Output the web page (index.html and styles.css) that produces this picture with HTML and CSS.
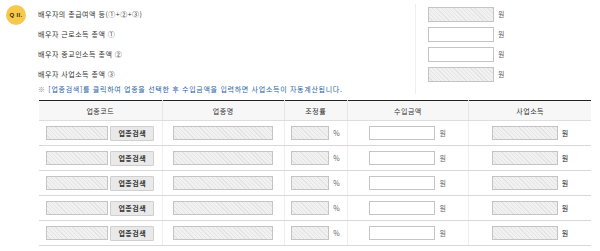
FILE: index.html
```html
<!DOCTYPE html>
<html lang="ko">
<head>
  <meta charset="UTF-8" />
  <title>배우자 소득</title>
  <link rel="stylesheet" href="styles.css">
</head>
<body>

  <div class="wrap">
    <div class="badge">Q II.</div>

    <div class="content">
      <div class="summary">
        <div class="labels">
          <div class="row">배우자의 총급여액 등(①+②+③)</div>
          <div class="row">배우자 근로소득 총액 ①</div>
          <div class="row">배우자 종교인소득 총액 ②</div>
          <div class="row">배우자 사업소득 총액 ③</div>
          <div class="note"><span class="mark">※</span> [업종검색]를 클릭하여 업종을 선택한 후 수입금액을 입력하면 사업소득이 자동계산됩니다.</div>
        </div>
        <div class="amounts">
          <div class="row"><input class="box ro" type="text" readonly /><span class="unit">원</span></div>
          <div class="row"><input class="box" type="text" /><span class="unit">원</span></div>
          <div class="row"><input class="box" type="text" /><span class="unit">원</span></div>
          <div class="row"><input class="box ro" type="text" readonly /><span class="unit">원</span></div>
        </div>
      </div>

      <table class="biz">
        <thead>
          <tr>
            <th class="c1">업종코드</th>
            <th class="c2">업종명</th>
            <th class="c3">조정률</th>
            <th class="c4">수입금액</th>
            <th class="c5">사업소득</th>
          </tr>
        </thead>
        <tbody id="rows"></tbody>
      </table>
    </div>
  </div>

  <script>
    var tbody = document.getElementById('rows');
    for (var i = 0; i < 5; i++) {
      var tr = document.createElement('tr');
      tr.innerHTML =
        '<td><input class="box ro code" type="text" readonly /><button type="button" class="search">업종검색</button></td>' +
        '<td><input class="box ro name" type="text" readonly /></td>' +
        '<td><input class="box ro rate" type="text" readonly /><span class="unit">%</span></td>' +
        '<td><input class="box amt" type="text" /><span class="unit">원</span></td>' +
        '<td><input class="box ro amt" type="text" readonly /><span class="unit dark">원</span></td>';
      tbody.appendChild(tr);
    }
  </script>
</body>
</html>
```

FILE: styles.css
```css
body {
  margin: 0;
  font-family: "Noto Sans CJK KR", "Noto Sans", sans-serif;
  font-size: 7px;
  color: #333;
  background: #fff;
}

.wrap {
  display: flex;
  padding: 5px 0 0 6px;
}

.badge {
  width: 20px;
  height: 20px;
  border-radius: 50%;
  background: #f6c94a;
  color: #3a2a10;
  font-family: "Liberation Sans", sans-serif;
  font-size: 6px;
  font-weight: bold;
  letter-spacing: 0.3px;
  display: flex;
  align-items: center;
  justify-content: center;
  flex-shrink: 0;
}

.content {
  margin-left: 12px;
  margin-top: -2px;
}

.summary {
  display: flex;
  padding-top: 1px;
}

.labels {
  width: 377px;
  letter-spacing: 0.5px;
}

.row {
  height: 20px;
  display: flex;
  align-items: center;
}

.note {
  height: 10px;
  line-height: 10px;
  color: #1f5fa6;
  letter-spacing: 0.7px;
  white-space: nowrap;
}

.note .mark {
  color: #888;
}

.amounts {
  border-left: 1px solid #eee;
  padding-left: 12px;
  height: 90px;
}

.box {
  box-sizing: border-box;
  height: 15px;
  width: 66px;
  margin: 0;
  padding: 0;
  border: 1px solid #c4c4c4;
  background: #fff;
  vertical-align: middle;
}

.box.ro {
  background: repeating-linear-gradient(45deg, #f1f1f1 0, #f1f1f1 2px, #e4e4e4 2px, #e4e4e4 3px);
}

.unit {
  margin-left: 4px;
  color: #666;
  vertical-align: middle;
}

.unit.dark {
  color: #222;
}

.biz {
  margin-top: 6px;
  width: 552px;
  margin-left: 1px;
  border-collapse: collapse;
  border-top: 1px solid #222;
  letter-spacing: 0.5px;
}

.biz th {
  height: 19px;
  padding: 0;
  background: #f7f7f7;
  font-weight: normal;
  color: #333;
  border-bottom: 1px solid #ddd;
  border-left: 1px solid #e6e6e6;
}

.biz th:first-child,
.biz td:first-child {
  border-left: none;
}

.c1 { width: 123px; }
.c2 { width: 122px; }
.c3 { width: 62px; }
.c4 { width: 122px; }
.c5 { width: 123px; }

.biz td {
  height: 24px;
  padding: 0;
  text-align: center;
  white-space: nowrap;
  border-bottom: 1px solid #d8d8d8;
  border-left: 1px solid #eee;
}

.biz .box {
  height: 14px;
}

.box.code { width: 62px; }
.box.name { width: 100px; }
.box.rate { width: 38px; }
.box.amt { width: 66px; }

.search {
  box-sizing: border-box;
  width: 44px;
  height: 15px;
  margin: 0 0 0 2px;
  padding: 0;
  border: 1px solid #cfcfcf;
  border-radius: 1px;
  background: #e9e9e9;
  font-family: inherit;
  font-size: 7px;
  font-weight: bold;
  letter-spacing: 0.5px;
  color: #333;
  vertical-align: middle;
}
```
